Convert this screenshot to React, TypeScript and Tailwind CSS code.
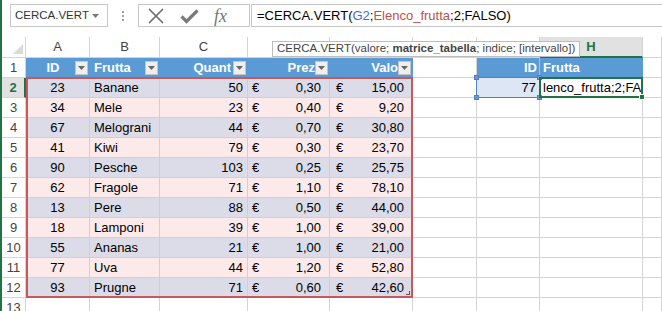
import React from 'react';

const rows: string[][] = [
  ['23', 'Banane', '50', '0,30', '15,00'],
  ['34', 'Mele', '23', '0,40', '9,20'],
  ['67', 'Melograni', '44', '0,70', '30,80'],
  ['41', 'Kiwi', '79', '0,30', '23,70'],
  ['90', 'Pesche', '103', '0,25', '25,75'],
  ['62', 'Fragole', '71', '1,10', '78,10'],
  ['13', 'Pere', '88', '0,50', '44,00'],
  ['18', 'Lamponi', '39', '1,00', '39,00'],
  ['55', 'Ananas', '21', '1,00', '21,00'],
  ['77', 'Uva', '44', '1,20', '52,80'],
  ['93', 'Prugne', '71', '0,60', '42,60'],
];

const GRID =
  'grid grid-cols-[24px_64px_70px_88px_82px_83px_64px_63px_103px_1fr] grid-rows-[21px_repeat(12,20px)_1fr]';
const line = 'border-r border-b border-[#d4d4d4]';
const hdr = 'border-r border-b border-[#d4d4d4] flex items-center justify-center text-[13px] text-[#444] bg-white';

function Drop() {
  return (
    <div className="absolute right-[2px] top-[3px] w-[13px] h-[14px] bg-[#efefef] border border-[#c4c4c4] flex items-center justify-center">
      <svg width="7" height="4" viewBox="0 0 7 4">
        <path d="M0 0h7L3.5 4z" fill="#666" />
      </svg>
    </div>
  );
}

function RowHead({ n }: { n: number }) {
  if (n === 2) {
    return (
      <div className="border-b border-[#d4d4d4] border-r-2 border-r-[#217346] bg-[#e1e1e1] flex items-center justify-center text-[13px] font-bold text-[#217346]">
        2
      </div>
    );
  }
  return <div className={hdr}>{n}</div>;
}

function DataRow({ r, i }: { r: string[]; i: number }) {
  const band = i % 2 === 0 ? 'bg-[#dcdce9]' : 'bg-[#fce9ea]';
  const cell = 'border-r border-b border-[#cfcfd9] flex items-center overflow-hidden whitespace-nowrap text-[13px] text-black ' + band;
  const n = i + 2;
  return (
    <>
      <RowHead n={n} />
      <div className={cell + ' justify-center'}>{r[0]}</div>
      <div className={cell + ' pl-[4px]'}>{r[1]}</div>
      <div className={cell + ' justify-end pr-[4px]'}>{r[2]}</div>
      <div className={cell + ' justify-between pl-[4px] pr-[8px]'}>
        <span>€</span>
        <span>{r[3]}</span>
      </div>
      <div className={cell + ' justify-between pl-[6px] pr-[8px]'}>
        <span>€</span>
        <span>{r[4]}</span>
      </div>
      <div className={line} />
      {n === 2 ? (
        <div className="border-r border-b border-[#d4d4d4] bg-[#dce6f4] flex items-center justify-end pr-[3px] text-[13px]">77</div>
      ) : (
        <div className={line} />
      )}
      {n === 2 ? (
        <div className="border-r border-b border-[#d4d4d4] bg-white flex items-center pl-[3px] overflow-hidden whitespace-nowrap text-[13px]">
          lenco_frutta;2;FA
        </div>
      ) : (
        <div className={line} />
      )}
      <div className={line} />
    </>
  );
}

function Handle({ pos }: { pos: string }) {
  return <div className={'absolute w-[5px] h-[5px] bg-[#6f95d3] border border-[#4f81bd] ' + pos} />;
}

export default function App() {
  const blueHead = 'relative bg-[#5b9bd5] border-b border-[#5b9bd5] flex items-center overflow-hidden whitespace-nowrap text-[13px] font-bold text-white';
  return (
    <div className="relative w-[662px] h-[311px] overflow-hidden bg-white border-l-2 border-[#217346] flex flex-col font-['Liberation_Sans',Arial,sans-serif]">
      {/* formula bar */}
      <div className="h-[37px] shrink-0 flex items-start pt-[4px]">
        <div className="ml-[8px] w-[98px] h-[23px] border border-[#c6c6c6] flex items-center justify-between pl-[4px] pr-[8px] text-[11.5px] text-[#333]">
          <span>CERCA.VERT</span>
          <svg width="7" height="4" viewBox="0 0 7 4">
            <path d="M0 0h7L3.5 4z" fill="#777" />
          </svg>
        </div>
        <div className="w-[30px] h-[23px] flex flex-col items-center justify-center gap-[2px]">
          <div className="w-[2px] h-[2px] bg-[#a0a0a0]" />
          <div className="w-[2px] h-[2px] bg-[#a0a0a0]" />
          <div className="w-[2px] h-[2px] bg-[#a0a0a0]" />
        </div>
        <div className="w-[112px] h-[23px] border border-[#c6c6c6] flex items-center pl-[8px] gap-[15px]">
          <svg width="18" height="16" viewBox="0 0 18 16">
            <path d="M2 1L16 15M16 1L2 15" stroke="#707070" strokeWidth="1.7" fill="none" />
          </svg>
          <svg width="19" height="16" viewBox="0 0 19 16">
            <path d="M1.5 8.5L6.5 13.5L17.5 2.5" stroke="#7a7a7a" strokeWidth="3.2" fill="none" />
          </svg>
          <span className="font-['Liberation_Serif',serif] italic text-[18px] text-[#777] leading-none">fx</span>
        </div>
        <div className="flex-1 h-[23px] border border-[#c6c6c6] border-r-0 ml-[1px] pl-[5px] flex items-center text-[13px] text-black whitespace-nowrap overflow-hidden">
          =CERCA.VERT(<span className="text-[#3f6fc4]">G2</span>;<span className="text-[#c0504d]">Elenco_frutta</span>;2;FALSO)
        </div>
      </div>

      {/* sheet */}
      <div className="grid flex-1 min-h-0">
        <div className={'col-start-1 row-start-1 ' + GRID}>
          {/* column headers */}
          <div className={'relative ' + line + ' bg-white'}>
            <svg className="absolute right-[2px] bottom-[3px]" width="10" height="10" viewBox="0 0 10 10">
              <polygon points="10,0 10,10 0,10" fill="#d9d9d9" />
            </svg>
          </div>
          <div className={hdr}>A</div>
          <div className={hdr}>B</div>
          <div className={hdr}>C</div>
          <div className={hdr}>D</div>
          <div className={hdr}>E</div>
          <div className={hdr}>F</div>
          <div className={hdr}>G</div>
          <div className="border-r border-[#d4d4d4] border-b-2 border-b-[#217346] bg-[#e1e1e1] flex items-center justify-center text-[13px] font-bold text-[#217346]">
            H
          </div>
          <div className={hdr} />

          {/* row 1 */}
          <RowHead n={1} />
          <div className={blueHead + ' justify-center pr-[10px]'}>
            ID
            <Drop />
          </div>
          <div className={blueHead + ' pl-[4px]'}>
            Frutta
            <Drop />
          </div>
          <div className={blueHead + ' pl-[4px]'}>
            <span className="flex-1 overflow-hidden mr-[17px] flex justify-end">
              <span className="flex">Quant</span>
            </span>
            <Drop />
          </div>
          <div className={blueHead + ' pl-[4px]'}>
            <span className="flex-1 overflow-hidden mr-[15px] flex justify-end">Prez</span>
            <Drop />
          </div>
          <div className={blueHead + ' pl-[4px]'}>
            <span className="flex-1 overflow-hidden mr-[15px] flex justify-end">Valo</span>
            <Drop />
          </div>
          <div className={line} />
          <div className="bg-[#5b9bd5] border-r border-r-[#9fc3e7] border-b border-b-[#5b9bd5] flex items-center justify-end pr-[2px] text-[13px] font-bold text-white">
            ID
          </div>
          <div className="bg-[#5b9bd5] border-r border-b border-[#5b9bd5] flex items-center pl-[3px] text-[13px] font-bold text-white">
            Frutta
          </div>
          <div className={line} />

          {rows.map((r, i) => (
            <DataRow key={i} r={r} i={i} />
          ))}

          {/* row 13 */}
          <RowHead n={13} />
          <div className={line} />
          <div className={line} />
          <div className={line} />
          <div className={line} />
          <div className={line} />
          <div className={line} />
          <div className={line} />
          <div className={line} />
          <div className={line} />
        </div>

        {/* overlays */}
        <div className={'col-start-1 row-start-1 relative z-10 pointer-events-none ' + GRID}>
          <div className="col-start-2 col-end-7 row-start-3 row-end-14 -mt-[1px] border-2 border-[#c9585a] relative">
            <div className="absolute right-[1px] bottom-[1px] w-[4px] h-[4px] border-r border-b border-[#555]" />
          </div>
          <div className="col-start-8 row-start-3 -ml-[1px] -mt-[1px] border border-[#4f81bd] relative">
            <Handle pos="-left-[3px] -top-[3px]" />
            <Handle pos="-right-[3px] -top-[3px]" />
            <Handle pos="-left-[3px] -bottom-[3px]" />
            <Handle pos="-right-[3px] -bottom-[3px]" />
          </div>
          <div className="col-start-9 row-start-3 -ml-[1px] -mt-[1px] border-2 border-[#217346] relative">
            <div className="absolute -right-[4px] -bottom-[4px] w-[6px] h-[6px] bg-[#217346] border border-white" />
          </div>
        </div>
      </div>

      {/* tooltip */}
      <div className="absolute left-[270px] top-[41px] h-[16px] px-[4px] bg-white border border-[#bdbdbd] flex items-center text-[11.5px] text-[#444] whitespace-pre leading-none">
        <span>CERCA.VERT(valore; </span>
        <b className="font-bold">matrice_tabella</b>
        <span>; indice; [intervallo])</span>
      </div>
    </div>
  );
}
